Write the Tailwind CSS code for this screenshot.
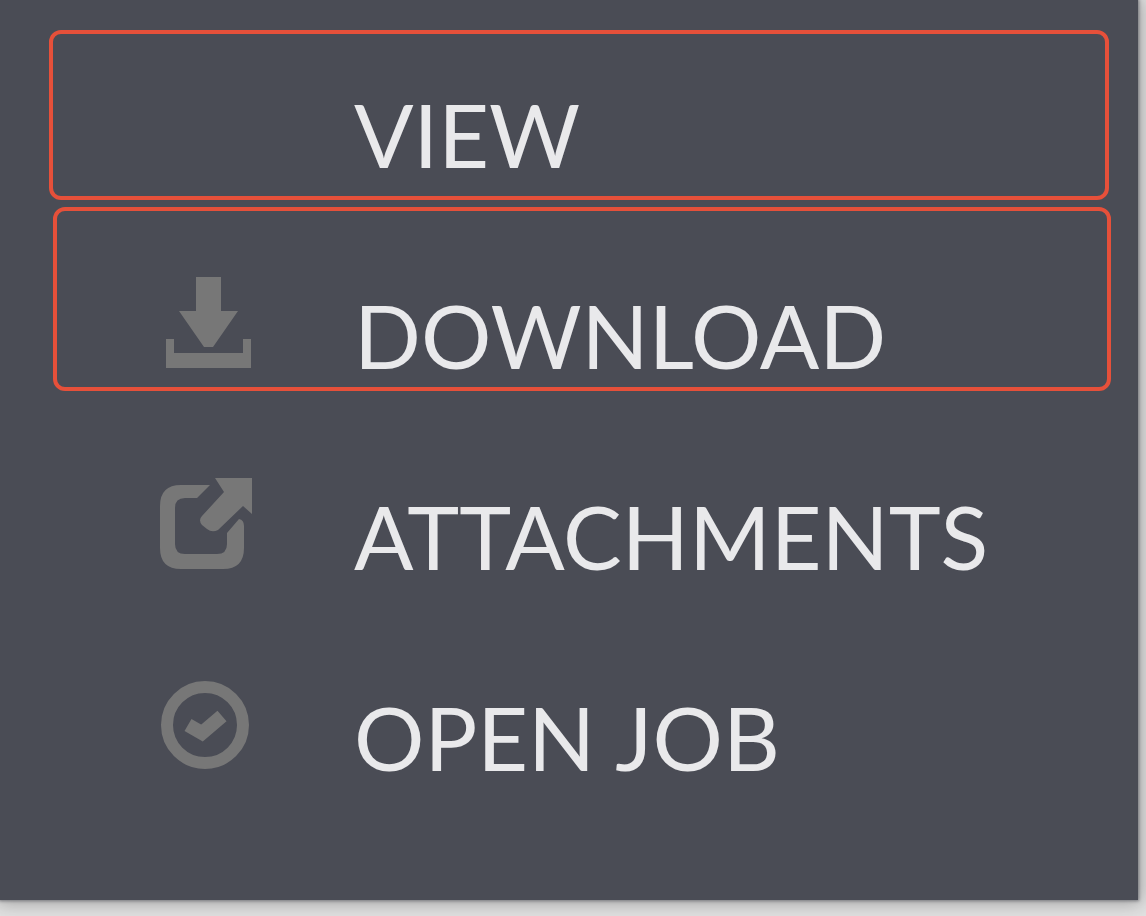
<!DOCTYPE html>
<html lang="en">
<head>
    <meta charset="UTF-8">
    <meta name="viewport" content="width=device-width, initial-scale=1.0">
    <title>Job Menu</title>
    <script src="https://cdn.jsdelivr.net/npm/@tailwindcss/browser@4"></script>
</head>
<body class="bg-[#e2e2e2] font-['Lato',sans-serif] overflow-x-hidden">
    <!-- Dropdown panel -->
    <div class="pr-2 pb-4 overflow-hidden">
        <nav class="bg-[#4a4c55] pt-[33px] pb-[63px] shadow-[0_0_3px_1px_#77787d,0_0_18px_3px_rgba(0,0,0,0.3)]">
            <ul>
                <!-- View -->
                <li class="relative h-[201px]">
                    <a href="#view" class="flex items-center h-full pl-40 gap-[102px] text-[88px] leading-none text-[#e9e9eb]">
                        <span class="w-[92px] shrink-0"></span>
                        <span class="whitespace-nowrap">VIEW</span>
                    </a>
                    <div class="absolute left-[49px] right-[29px] -top-[3px] h-[170px] border-4 border-[#e6503a] rounded-xl pointer-events-none"></div>
                </li>

                <!-- Download -->
                <li class="relative h-[201px]">
                    <a href="#download" class="flex items-center h-full pl-40 gap-[102px] text-[88px] leading-none text-[#e9e9eb]">
                        <svg class="size-[92px] shrink-0 mb-6 text-[#777777]" viewBox="0 0 92 92" fill="currentColor" aria-hidden="true">
                            <path d="M36 0h25v34h17L53 70h-9L19 34h17z"/>
                            <path d="M6 62h8v14h69V62h8v29H6z"/>
                        </svg>
                        <span class="whitespace-nowrap">DOWNLOAD</span>
                    </a>
                    <div class="absolute left-[53px] right-[27px] -top-[27px] h-[184px] border-4 border-[#e6503a] rounded-xl pointer-events-none"></div>
                </li>

                <!-- Attachments -->
                <li class="h-[201px]">
                    <a href="#attachments" class="flex items-center h-full pl-40 gap-[102px] text-[88px] leading-none text-[#e9e9eb]">
                        <svg class="size-[92px] shrink-0 mb-6 text-[#777777]" viewBox="0 0 92 92" fill="currentColor" aria-hidden="true">
                            <path d="M50 7L37 20H25q-10 0-10 10v36q0 10 10 10h32q10 0 10-10V55l12-14q5 1 5 7v22q0 21-21 21H21Q0 91 0 70V28Q0 7 21 7z"/>
                            <path d="M55 0h37v36l-9-8-25 24q-6 3-11-1l-5-4q-4-5 0-9l22-24z"/>
                        </svg>
                        <span class="whitespace-nowrap">ATTACHMENTS</span>
                    </a>
                </li>

                <!-- Open job -->
                <li class="h-[201px]">
                    <a href="#open-job" class="flex items-center h-full pl-40 gap-[102px] text-[88px] leading-none text-[#e9e9eb]">
                        <svg class="size-[92px] shrink-0 mb-6 text-[#777777]" viewBox="0 0 92 92" fill="none" stroke="currentColor" aria-hidden="true">
                            <circle cx="45" cy="46" r="38" stroke-width="12"/>
                            <path d="M28 46l14 8 20-17" stroke-width="14"/>
                        </svg>
                        <span class="whitespace-nowrap">OPEN JOB</span>
                    </a>
                </li>
            </ul>
        </nav>
    </div>
</body>
</html>
